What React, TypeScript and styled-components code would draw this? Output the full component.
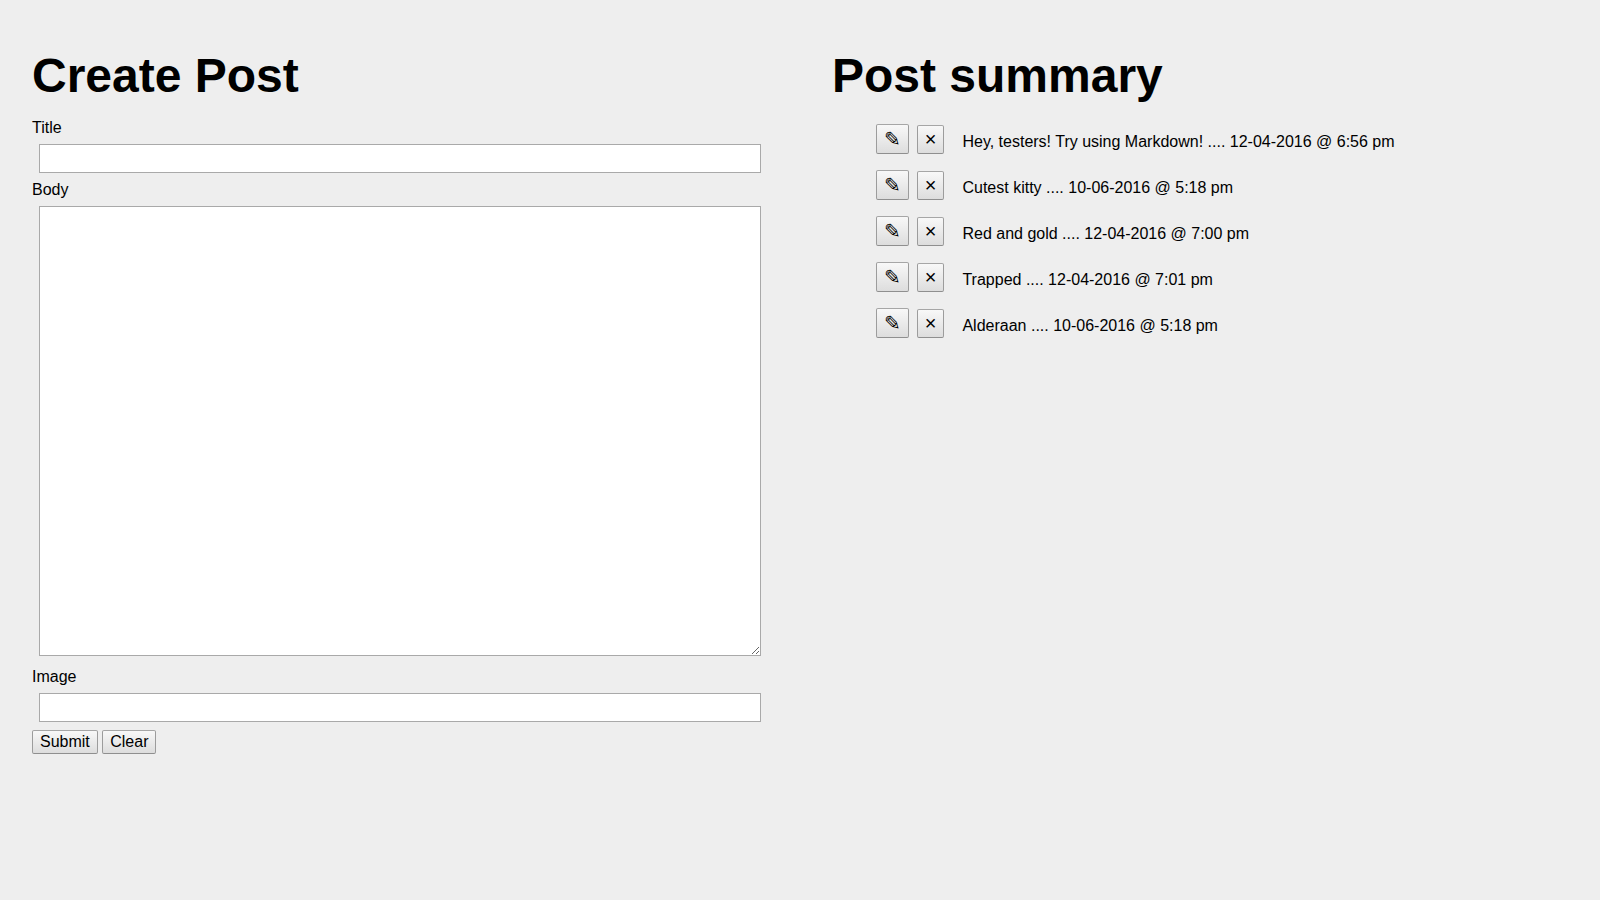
import React from "react";
import styled, { createGlobalStyle } from "styled-components";

const GlobalStyle = createGlobalStyle`
  * { box-sizing: border-box; }
  body {
    margin: 0;
    background: #eee;
    color: #000;
    font: 16px/18px "Liberation Sans", Arial, sans-serif;
  }
`;

const Page = styled.main`
  display: grid;
  grid-template-columns: 800px 800px;
  height: 900px;
  overflow: hidden;
`;

const Column = styled.section`
  padding: 48px 32px 0;
`;

const Heading = styled.h1`
  margin: 0;
  font-size: 48px;
  line-height: 55px;
  font-weight: bold;
`;

const Form = styled.form`
  padding-top: 16px;
`;

const Label = styled.label`
  display: block;
  height: 18px;
`;

const Field = styled.input`
  display: block;
  width: 722px;
  height: 29px;
  margin: 7px 0 8px 7px;
  padding: 4px;
  border: 1px solid #a9a9a9;
  border-radius: 0;
  background: #fff;
  outline: none;
`;

const BodyField = styled(Field)`
  height: 450px;
  margin-bottom: 12px;
  resize: both;
`;

const Button = styled.button`
  height: 24px;
  padding: 0 7px;
  border: 1px solid;
  border-color: #a6a6a6 #9c9c9c #8f8f8f;
  border-radius: 2px;
  background: linear-gradient(#f8f8f8, #dddddd);
  color: #000;
  font: inherit;
`;

const Actions = styled.div`
  display: flex;
  gap: 4.45px;
`;

const List = styled.ul`
  display: flex;
  flex-direction: column;
  gap: 16px;
  margin: 0;
  padding: 21px 0 0 44px;
  list-style: none;
`;

const Row = styled.li`
  display: flex;
  height: 30px;
`;

const IconButton = styled(Button)`
  flex: none;
  padding: 0;
  font-size: 20px;
  line-height: 23px;
`;

const EditButton = styled(IconButton)`
  width: 32.77px;
  height: 30px;
  margin-right: 8px;
`;

const DeleteButton = styled(IconButton)`
  width: 27.68px;
  height: 29px;
  margin: 1px 18px 0 0;
`;

const Summary = styled.span`
  padding-top: 9px;
  white-space: nowrap;
`;

const posts = [
  { title: "Hey, testers! Try using Markdown!", date: "12-04-2016 @ 6:56 pm" },
  { title: "Cutest kitty", date: "10-06-2016 @ 5:18 pm" },
  { title: "Red and gold", date: "12-04-2016 @ 7:00 pm" },
  { title: "Trapped", date: "12-04-2016 @ 7:01 pm" },
  { title: "Alderaan", date: "10-06-2016 @ 5:18 pm" },
];

export default function App() {
  return (
    <Page>
      <GlobalStyle />
      <Column>
        <Heading>Create Post</Heading>
        <Form onSubmit={(e) => e.preventDefault()}>
          <Label htmlFor="title">Title</Label>
          <Field id="title" />
          <Label htmlFor="body">Body</Label>
          <BodyField as="textarea" id="body" />
          <Label htmlFor="image">Image</Label>
          <Field id="image" />
          <Actions>
            <Button type="submit">Submit</Button>
            <Button type="reset">Clear</Button>
          </Actions>
        </Form>
      </Column>
      <Column>
        <Heading>Post summary</Heading>
        <List>
          {posts.map((post) => (
            <Row key={post.title}>
              <EditButton>✎</EditButton>
              <DeleteButton>×</DeleteButton>
              <Summary>{post.title} .... {post.date}</Summary>
            </Row>
          ))}
        </List>
      </Column>
    </Page>
  );
}
